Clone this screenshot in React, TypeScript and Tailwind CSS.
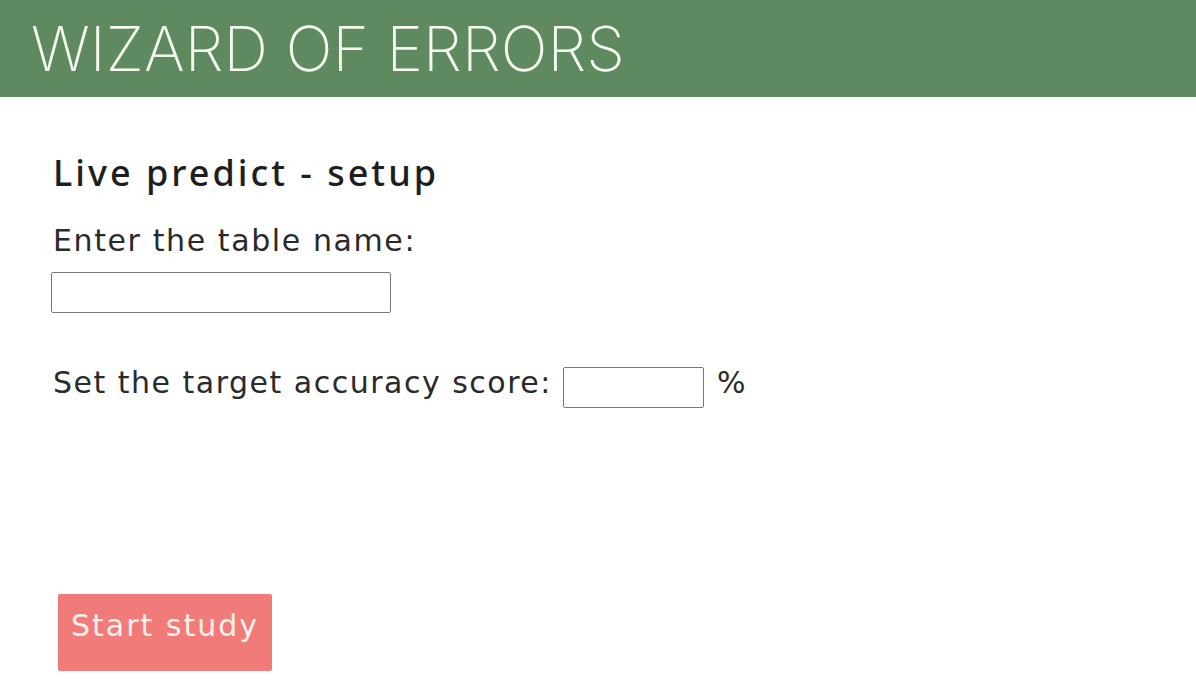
import React, { useState } from 'react';

const font = { fontFamily: '"DejaVu Sans", "Noto Sans", sans-serif' };

export default function App() {
  const [tableName, setTableName] = useState('');
  const [target, setTarget] = useState('');

  return (
    <div className="min-h-[696px] w-full bg-white text-[#222]" style={font}>
      <header className="h-[97px] bg-[#5f8a60] flex items-center pl-[31px]">
        <h1 className="text-[62px] leading-none tracking-[0.1px] text-[#f4fbef]" style={{ fontFamily: 'Inter, "Noto Sans", sans-serif', fontWeight: 200 }}>
          WIZARD OF ERRORS
        </h1>
      </header>

      <main className="pl-[53px] pt-[58px]">
        <h2 className="text-[36px] font-medium leading-none tracking-[3px] text-[#1e1e1e]" style={{ fontFamily: '"Noto Sans", sans-serif' }}>
          Live predict - setup
        </h2>

        <label className="block mt-[35px] text-[30px] leading-none tracking-[1.6px] text-[#2a2a2a]">Enter the table name:</label>
        <input
          value={tableName}
          onChange={(e) => setTableName(e.target.value)}
          className="block mt-[16px] -ml-[2px] w-[340px] h-[41px] border border-[#777] rounded-[2px] bg-white outline-none"
        />

        <div className="flex items-start mt-[54px] text-[30px] leading-none tracking-[1.5px] text-[#2a2a2a]">
          <span className="mt-[1px]">Set the target accuracy score:</span>
          <input
            value={target}
            onChange={(e) => setTarget(e.target.value)}
            className="ml-[11px] w-[141px] h-[41px] border border-[#777] rounded-[2px] bg-white outline-none"
          />
          <span className="ml-[13px] mt-[1px]">%</span>
        </div>

        <button className="mt-[186px] ml-[5px] w-[214px] h-[77px] flex items-start justify-center pt-[17px] bg-[#f07b78] rounded-[2px] text-[30px] leading-none text-[#fff1ec] tracking-[2px]">
          Start study
        </button>
      </main>
    </div>
  );
}
